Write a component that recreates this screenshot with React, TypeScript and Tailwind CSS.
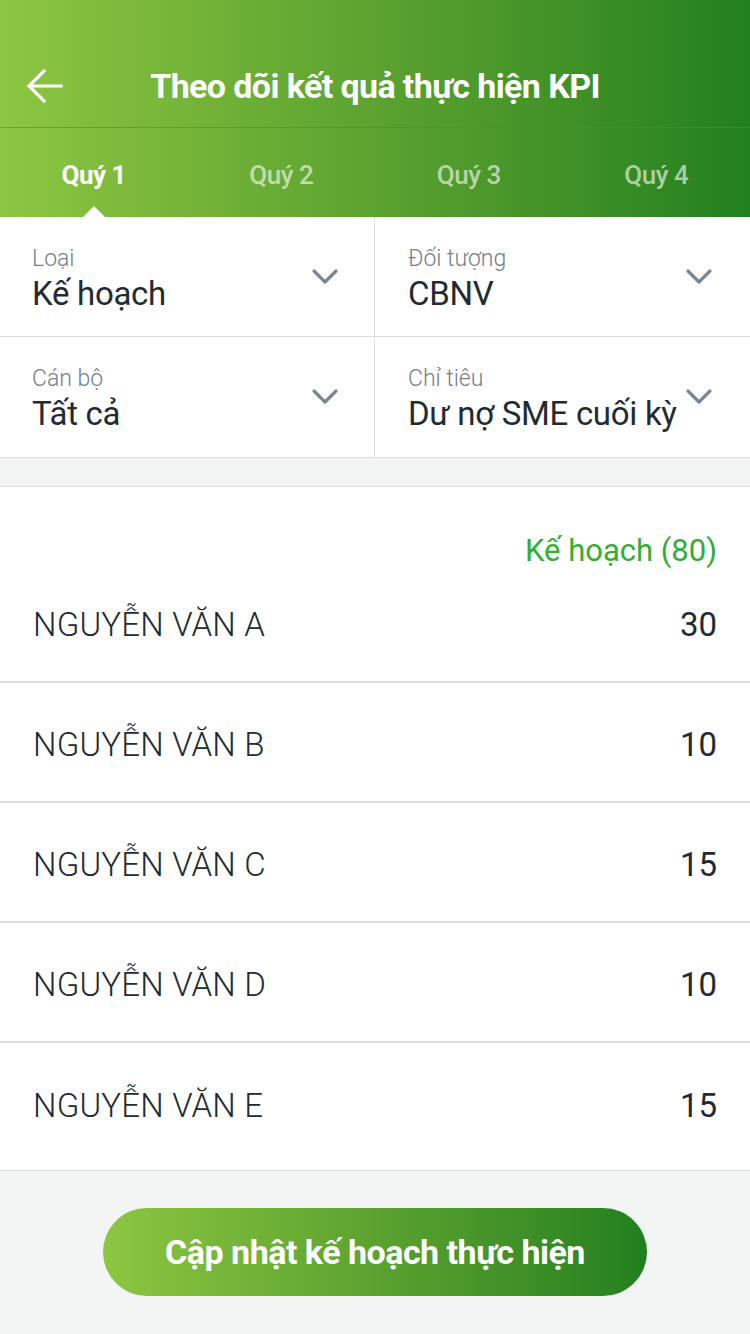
import React from 'react'

const rows = [
    { name: 'NGUYỄN VĂN A', value: 30 },
    { name: 'NGUYỄN VĂN B', value: 10 },
    { name: 'NGUYỄN VĂN C', value: 15 },
    { name: 'NGUYỄN VĂN D', value: 10 },
    { name: 'NGUYỄN VĂN E', value: 15 },
]

const filters = [
    { label: 'Loại', value: 'Kế hoạch' },
    { label: 'Đối tượng', value: 'CBNV' },
    { label: 'Cán bộ', value: 'Tất cả' },
    { label: 'Chỉ tiêu', value: 'Dư nợ SME cuối kỳ' },
]

const tabs = ['Quý 1', 'Quý 2', 'Quý 3', 'Quý 4']

const Chevron = () => (
    <svg width="28" height="18" viewBox="0 0 28 18" fill="none">
        <path d="M3 3l11 11L25 3" stroke="#7a8793" strokeWidth="3.2" strokeLinecap="round" strokeLinejoin="round" />
    </svg>
)

const App = () => {
    return (
        <div className="w-[750px] min-h-[1334px] bg-[#f3f5f5] font-['Roboto',sans-serif]">
            <div className="bg-gradient-to-r from-[#8dc641] to-[#20801f]">
                <div className="relative h-[128px] flex items-center justify-center border-b border-[#4d8f2c]/60">
                    <button className="absolute left-[26px] top-[68px]">
                        <svg width="38" height="38" viewBox="0 0 38 38" fill="none">
                            <path d="M35 18H4M18 3L3 18l15 15" stroke="white" strokeWidth="3.2" strokeLinecap="square" />
                        </svg>
                    </button>
                    <h1 className="mt-[46px] text-white text-[34px] font-bold tracking-[-0.6px]">Theo dõi kết quả thực hiện KPI</h1>
                </div>
                <div className="grid grid-cols-4 h-[89px]">
                    {tabs.map((t, i) => (
                        <div key={t} className="relative flex items-center justify-center pt-[5px]">
                            <span className={i === 0 ? 'text-white font-bold text-[26px] tracking-[-0.5px]' : 'text-white/60 font-medium text-[26px] tracking-[-0.5px]'}>{t}</span>
                            {i === 0 && (
                                <span className="absolute bottom-0 left-1/2 -translate-x-1/2 w-0 h-0 border-l-[11px] border-r-[11px] border-b-[11px] border-l-transparent border-r-transparent border-b-white" />
                            )}
                        </div>
                    ))}
                </div>
            </div>

            <div className="grid grid-cols-2 bg-white border-b border-[#dcdcdc]">
                {filters.map((f, i) => (
                    <div
                        key={f.label}
                        className={`h-[120px] flex items-center justify-between ${i % 2 === 0 ? 'pl-[32px] pr-[35px] border-r border-[#dcdcdc]' : 'pl-[33px] pr-[37px]'} ${i < 2 ? 'border-b border-[#dcdcdc]' : ''}`}>
                        <div className="flex flex-col pt-[8px]">
                            <span className="text-[23px] leading-[26px] text-[#75808a] font-light">{f.label}</span>
                            <span className="text-[33px] leading-[44px] text-[#222b33] whitespace-nowrap tracking-[-0.3px]">{f.value}</span>
                        </div>
                        <div className={i === 3 ? 'self-start mt-[51px]' : ''}>
                            <Chevron />
                        </div>
                    </div>
                ))}
            </div>

            <div className="mt-[28px] bg-white border-t border-b border-[#dcdcdc] pb-[7px]">
                <div className="h-[76px] flex items-end justify-end px-[33px] pb-[0px]">
                    <span className="text-[31px] leading-[36px] text-[#34ad32] -mb-[6px]">Kế hoạch (80)</span>
                </div>
                {rows.map((r, i) => (
                    <div
                        key={r.name}
                        className={`h-[120px] flex items-center justify-between px-[33px] pt-[6px] ${i < rows.length - 1 ? 'border-b-2 border-[#dcdcdc]' : ''}`}>
                        <span className="text-[33px] text-[#222b33] font-light tracking-[0.2px]">{r.name}</span>
                        <span className="text-[33px] text-[#222b33]">{r.value}</span>
                    </div>
                ))}
            </div>

            <div className="flex justify-center pt-[37px] pb-[38px]">
                <button className="w-[544px] h-[88px] rounded-full bg-gradient-to-r from-[#8dc641] to-[#20801f] text-white text-[34px] font-bold tracking-[-0.5px]">
                    Cập nhật kế hoạch thực hiện
                </button>
            </div>
        </div>
    )
}

export default App
